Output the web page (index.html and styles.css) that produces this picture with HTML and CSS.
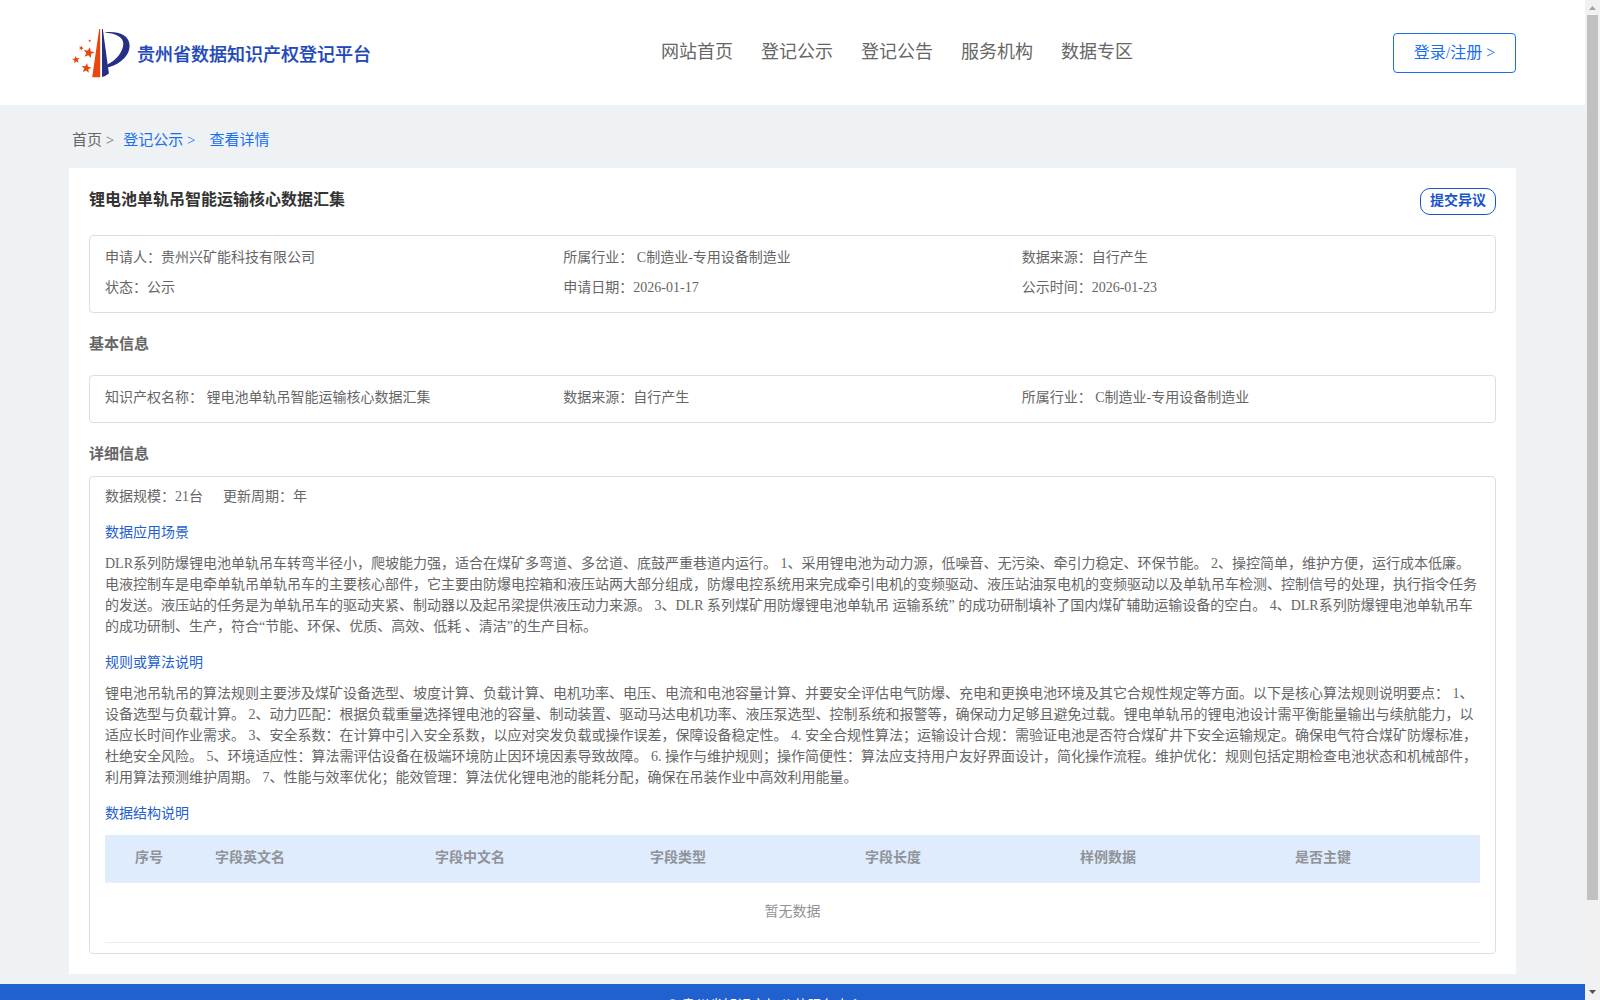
FILE: index.html
```html
<!DOCTYPE html>
<html lang="zh-CN">
<head>
<meta charset="utf-8">
<title>贵州省数据知识产权登记平台</title>
<link rel="stylesheet" href="styles.css">
</head>
<body>
<div class="page">
  <header class="header">
    <div class="brand">
      <svg class="logo" viewBox="72 28 58 50" width="58" height="50">
        <defs><path id="star" d="M0-1 .27-.34 1-.3 .42.13 .6.85 0 .45-.6.85-.42.13-1-.3-.27-.34z"/></defs>
        <path fill="#e8450f" d="M99.2 29h1V77.3h-8z"/>
        <path fill="#262f86" d="M102 29h.8L108.900 73.500Q106 76 102 77z"/>
        <path fill="#262f86" d="M104.300 32.400C116 30.500 129.600 34 129.600 45.500C129.600 56.500 119 64.800 107.300 67.600V64.600C116 60.500 123.300 52 123.300 43.500C123.300 36.500 115 33.200 104.300 32.400z"/>
        <g fill="#e8450f">
          <use href="#star" transform="translate(88.800 52.700) rotate(12) scale(5.600)"/>
          <use href="#star" transform="translate(76 59.700) rotate(-8) scale(3.800)"/>
          <use href="#star" transform="translate(86.400 68.200) rotate(8) scale(5)"/>
          <use href="#star" transform="translate(81.200 48) rotate(20) scale(2.500)"/>
          <use href="#star" transform="translate(89.700 40.800) scale(1.500)"/>
        </g>
      </svg>
      <span class="brand-name">贵州省数据知识产权登记平台</span>
    </div>
    <nav class="nav"><a>网站首页</a><a>登记公示</a><a>登记公告</a><a>服务机构</a><a>数据专区</a></nav>
    <a class="login">登录/注册 &gt;</a>
  </header>
  <div class="crumbs"><span>首页 &gt;</span><a class="crumb-list">登记公示 &gt;</a><a>查看详情</a></div>
  <main class="card">
    <div class="title-row"><h1>锂电池单轨吊智能运输核心数据汇集</h1><a class="objection">提交异议</a></div>
    <section class="box grid summary">
      <span>申请人：贵州兴矿能科技有限公司</span><span>所属行业： C制造业-专用设备制造业</span><span>数据来源：自行产生</span>
      <span>状态：公示</span><span>申请日期：2026-01-17</span><span>公示时间：2026-01-23</span>
    </section>
    <h2 class="basic-title">基本信息</h2>
    <section class="box grid">
      <span>知识产权名称： 锂电池单轨吊智能运输核心数据汇集</span><span>数据来源：自行产生</span><span>所属行业： C制造业-专用设备制造业</span>
    </section>
    <h2 class="detail-title">详细信息</h2>
    <section class="box detail">
      <div class="meta"><span>数据规模：21台</span><span>更新周期：年</span></div>
      <h3>数据应用场景</h3>
      <p>DLR系列防爆锂电池单轨吊车转弯半径小，爬坡能力强，适合在煤矿多弯道、多岔道、底鼓严重巷道内运行。 1、采用锂电池为动力源，低噪音、无污染、牵引力稳定、环保节能。 2、操控简单，维护方便，运行成本低廉。<br>电液控制车是电牵单轨吊单轨吊车的主要核心部件，它主要由防爆电控箱和液压站两大部分组成，防爆电控系统用来完成牵引电机的变频驱动、液压站油泵电机的变频驱动以及单轨吊车检测、控制信号的处理，执行指令任务<br>的发送。液压站的任务是为单轨吊车的驱动夹紧、制动器以及起吊梁提供液压动力来源。 3、DLR 系列煤矿用防爆锂电池单轨吊 运输系统” 的成功研制填补了国内煤矿辅助运输设备的空白。 4、DLR系列防爆锂电池单轨吊车<br>的成功研制、生产，符合“节能、环保、优质、高效、低耗 、清洁”的生产目标。</p>
      <h3>规则或算法说明</h3>
      <p>锂电池吊轨吊的算法规则主要涉及煤矿设备选型、坡度计算、负载计算、电机功率、电压、电流和电池容量计算、并要安全评估电气防爆、充电和更换电池环境及其它合规性规定等方面。以下是核心算法规则说明要点： 1、<br>设备选型与负载计算。 2、动力匹配：根据负载重量选择锂电池的容量、制动装置、驱动马达电机功率、液压泵选型、控制系统和报警等，确保动力足够且避免过载。锂电单轨吊的锂电池设计需平衡能量输出与续航能力，以<br>适应长时间作业需求。 3、安全系数：在计算中引入安全系数，以应对突发负载或操作误差，保障设备稳定性。 4. 安全合规性算法；运输设计合规：需验证电池是否符合煤矿井下安全运输规定。确保电气符合煤矿防爆标准，<br>杜绝安全风险。 5、环境适应性：算法需评估设备在极端环境防止因环境因素导致故障。 6. 操作与维护规则；操作简便性：算法应支持用户友好界面设计，简化操作流程。维护优化：规则包括定期检查电池状态和机械部件，<br>利用算法预测维护周期。 7、性能与效率优化；能效管理：算法优化锂电池的能耗分配，确保在吊装作业中高效利用能量。</p>
      <h3>数据结构说明</h3>
      <div class="table-head"><span>序号</span><span>字段英文名</span><span>字段中文名</span><span>字段类型</span><span>字段长度</span><span>样例数据</span><span>是否主键</span></div>
      <div class="table-empty">暂无数据</div>
    </section>
  </main>
  <footer class="footer">Copyright © 贵州省知识产权公共服务中心 All rights reserved</footer>
</div>
<div class="scrollbar">
  <svg width="15" height="15"><path fill="#a3a3a3" d="M4 10 7.500 6 11 10z"/></svg>
  <div class="thumb"></div>
  <svg width="15" height="15"><path fill="#505050" d="M4 5 7.500 9 11 5z"/></svg>
</div>
</body>
</html>
```

FILE: styles.css
```css
* { box-sizing: border-box; }
html, body { height: 100%; overflow: hidden; }
body {
  margin: 0;
  display: flex;
  background: #eef2f5;
  color: #666;
  font: 14px/21px "Liberation Serif", "Noto Sans CJK SC", serif;
  text-spacing-trim: space-all;
  white-space: nowrap;
}
h1, h2, h3, p { margin: 0; }
.page { width: 1585px; flex: none; }

.header {
  height: 105px;
  padding: 0 69px 0 72px;
  background: #fff;
  display: flex;
  align-items: center;
}
.brand { width: 589px; display: flex; align-items: center; gap: 7px; }
.brand-name { color: #2048b8; font-size: 18px; font-weight: 500; -webkit-text-stroke: .2px; line-height: 24px; padding-top: 4px; }
.nav { display: flex; gap: 28px; font-size: 18px; line-height: 24px; padding-bottom: 1px; }
.login {
  width: 123px;
  height: 40px;
  margin-left: auto;
  border: 1px solid #1a6ff0;
  border-radius: 4px;
  color: #1a6ff0;
  font-size: 16px;
  line-height: 38px;
  text-align: center;
}

.crumbs { height: 63px; padding: 8px 0 0 72px; display: flex; align-items: center; font-size: 15px; }
.crumbs a { color: #1a6ff0; margin-left: 9px; }
.crumbs .crumb-list + a { margin-left: 14px; }

.card { height: 806px; margin: 0 69px; padding: 20px; background: #fff; }
.title-row { height: 47px; display: flex; justify-content: space-between; align-items: flex-start; }
h1 { color: #333; font-size: 16px; line-height: 24px; }
.objection {
  width: 76px;
  height: 27px;
  border: 1px solid #1955c8;
  border-radius: 10px;
  color: #1955c8;
  font-weight: bold;
  line-height: 24px;
  text-align: center;
}
.box { border: 1px solid #dcdfe0; border-radius: 4px; padding: 7px 15px 9px; }
.grid { display: grid; grid-template-columns: repeat(3, 1fr); line-height: 30px; }
h2 { font-size: 15px; line-height: 20px; }
.basic-title { padding: 21px 0 21px; }
.detail-title { padding: 21px 0 12px; }
.detail { height: 478px; padding: 9px 15px 0; }
.meta { display: flex; gap: 20px; }
h3 { color: #1f5fcf; font-size: 14px; font-weight: normal; line-height: 21px; padding: 15px 0 10px; }
.detail h3:last-of-type { padding-bottom: 11px; }
.table-head {
  height: 48px;
  background: #dfecfe;
  border-bottom: 1px solid #ebeef5;
  color: #909399;
  font-weight: bold;
  line-height: 46px;
  display: grid;
  grid-template-columns: 80px 220px repeat(4, 215px) 1fr;
  padding-left: 30px;
}
.table-empty { height: 60px; border-bottom: 1px solid #ebeef5; color: #909399; line-height: 58px; text-align: center; }

.footer { height: 26px; margin-top: 10px; background: #2160cf; color: #fff; text-align: center; padding: 11px 7px 0 0; overflow: hidden; }

.scrollbar { width: 15px; background: #f1f1f1; display: flex; flex-direction: column; align-items: center; }
.scrollbar svg { display: block; flex: none; }
.thumb { width: 11px; height: 885px; background: #c1c1c1; margin-bottom: 85px; }
```
